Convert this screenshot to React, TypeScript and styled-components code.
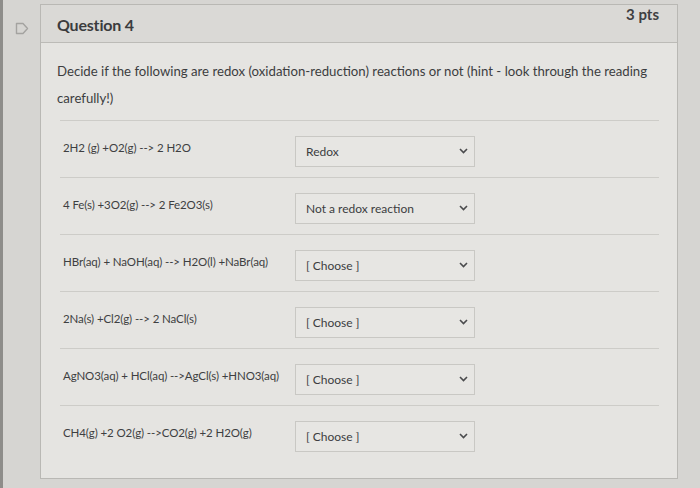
import React from "react";
import styled, { createGlobalStyle } from "styled-components";

const Global = createGlobalStyle`
  html, body { margin: 0; padding: 0; }
  body {
    width: 700px;
    height: 488px;
    overflow: hidden;
    background: #d6d5d2;
    font-family: Lato, "Open Sans", sans-serif;
    color: #3a3b3d;
  }
`;

const Page = styled.div`
  display: flex;
  height: 488px;
  box-shadow: inset 3px 0 0 #8e8d8a;
`;

const Rail = styled.div`
  width: 40px;
  flex: none;
  display: flex;
  justify-content: center;
  padding-top: 22px;
  box-sizing: border-box;
  padding-left: 3px;
`;

const Card = styled.div`
  width: 636px;
  height: 473px;
  margin-top: 4px;
  border: 1px solid #b9b8b4;
  background: #e5e4e1;
  display: flex;
  flex-direction: column;
`;

const Header = styled.div`
  height: 37px;
  background: #dad9d6;
  border-bottom: 1px solid #bcbbb7;
  display: flex;
  justify-content: space-between;
  padding: 0 16px 0 16px;
`;

const Title = styled.div`
  font-size: 16px;
  font-weight: 700;
  color: #3b3c3e;
  padding-top: 10px;
  letter-spacing: -0.2px;
`;

const Points = styled.div`
  font-size: 15px;
  font-weight: 700;
  color: #3f4042;
  padding-top: 0px;
  margin-right: 2px;
`;

const Body = styled.div`
  padding: 15px 16px 0 16px;
`;

const Prompt = styled.p`
  margin: 0 0 8px 0;
  font-size: 13.2px;
  line-height: 27px;
  color: #3c3d3f;
`;

const Rows = styled.div`
  margin-left: 3px;
  margin-right: 2px;
`;

const Row = styled.div`
  display: flex;
  align-items: center;
  height: 57px;
  box-sizing: border-box;
  border-top: 1px solid #cdccc8;
  padding-left: 3px;
`;

const Equation = styled.div`
  width: 232px;
  flex: none;
  font-size: 11.5px;
  color: #3e3f41;
  margin-top: -3px;
  letter-spacing: -0.1px;
`;

const SelectBox = styled.div`
  width: 180px;
  height: 31px;
  box-sizing: border-box;
  border: 1px solid #c9c8c4;
  background: #e7e6e3;
  display: flex;
  align-items: center;
  justify-content: space-between;
  padding: 0 6px 0 10px;
  font-size: 12px;
  color: #3c3d3f;
  margin-top: 4px;
`;

const Flag = () => (
  <svg width="14" height="13" viewBox="0 0 14 13">
    <path d="M1.5 1.5 H8 L12.5 6.5 L8 11.5 H1.5 Z" fill="none" stroke="#a4a3a0" strokeWidth="1.4" strokeLinejoin="round" />
  </svg>
);

const Chevron = () => (
  <svg width="9" height="6" viewBox="0 0 9 6">
    <path d="M1 1 L4.5 4.5 L8 1" fill="none" stroke="#4a4b4d" strokeWidth="1.6" />
  </svg>
);

const items: [string, string][] = [
  ["2H2 (g) +O2(g) --> 2 H2O", "Redox"],
  ["4 Fe(s) +3O2(g) --> 2 Fe2O3(s)", "Not a redox reaction"],
  ["HBr(aq) + NaOH(aq) --> H2O(l) +NaBr(aq)", "[ Choose ]"],
  ["2Na(s) +Cl2(g) --> 2 NaCl(s)", "[ Choose ]"],
  ["AgNO3(aq) + HCl(aq) -->AgCl(s) +HNO3(aq)", "[ Choose ]"],
  ["CH4(g) +2 O2(g) -->CO2(g) +2 H2O(g)", "[ Choose ]"],
];

export default function App() {
  return (
    <>
      <Global />
      <Page>
        <Rail>
          <Flag />
        </Rail>
        <Card>
          <Header>
            <Title>Question 4</Title>
            <Points>3 pts</Points>
          </Header>
          <Body>
            <Prompt>
              Decide if the following are redox (oxidation-reduction) reactions or not (hint - look through the reading carefully!)
            </Prompt>
            <Rows>
              {items.map(([eq, val]) => (
                <Row key={eq}>
                  <Equation>{eq}</Equation>
                  <SelectBox>
                    <span>{val}</span>
                    <Chevron />
                  </SelectBox>
                </Row>
              ))}
            </Rows>
          </Body>
        </Card>
      </Page>
    </>
  );
}
